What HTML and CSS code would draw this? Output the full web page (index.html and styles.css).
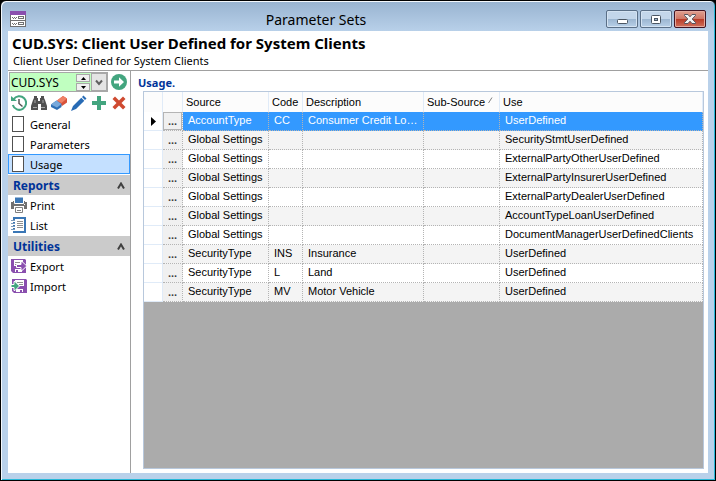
FILE: index.html
```html
<!DOCTYPE html>
<html lang="en">
<head>
  <meta charset="UTF-8">
  <meta name="viewport" content="width=device-width, initial-scale=1.0">
  <title>Parameter Sets</title>
  <link rel="stylesheet" href="styles.css">
</head>
<body>
  <div class="window">
    <div class="titlebar">
      <svg class="app-icon" width="16" height="16" viewBox="0 0 16 16" shape-rendering="crispEdges">
        <path fill="#fff" d="M0 0h16v16H0z"/>
        <path fill="#8a4fae" d="M0 0h16v4H0z"/>
        <path fill="none" stroke="#707070" d="M.5 4v11.500h15V4M0 9.500h16M8.500 5.500h5v2h-5zM8.500 11.500h5v2h-5z"/>
        <path fill="#707070" d="M2 6h1v1H2zM4 6h1v1H4zM3 7h1v1H3zM5 7h1v1H5zM6 6h1v1H6zM2 12h1v1H2zM4 12h1v1H4zM3 13h1v1H3zM5 13h1v1H5zM6 12h1v1H6z"/>
      </svg>
      <span class="title">Parameter Sets</span>
      <div class="controls">
        <button type="button" class="control" aria-label="Minimize">
          <svg width="12" height="12" viewBox="0 0 12 12"><rect x="1.500" y="6.500" width="10" height="4" rx="1" fill="#fff" stroke="#4b5663"/></svg>
        </button>
        <button type="button" class="control" aria-label="Maximize">
          <svg width="12" height="12" viewBox="0 0 12 12"><rect x="1.500" y="2.500" width="9" height="8" rx="1" fill="#fff" stroke="#4b5663"/><rect x="4.500" y="5.500" width="3" height="2" fill="#9db6cd" stroke="#4b5663"/></svg>
        </button>
        <button type="button" class="control close" aria-label="Close">
          <svg width="12" height="12" viewBox="0 0 12 12"><path d="M.5 1.500h3.500L6 3.800l2-2.300h3.500v1L8.200 6l3.300 3.500v1H8L6 8.200l-2 2.300H.5v-1L3.800 6 .5 2.500z" fill="#f2f2f2" stroke="#57555f"/></svg>
        </button>
      </div>
    </div>

    <div class="content">
      <header class="header">
        <h1>CUD.SYS: Client User Defined for System Clients</h1>
        <p>Client User Defined for System Clients</p>
      </header>

      <div class="panes">
        <aside class="sidebar">
          <div class="picker">
            <div class="combo">
              <input type="text" class="code" value="CUD.SYS" aria-label="Parameter set">
              <div class="spinner">
                <button type="button" class="spin" aria-label="Previous"><svg width="5" height="3" viewBox="0 0 5 3"><path d="M0 3L2.500 0 5 3z"/></svg></button>
                <button type="button" class="spin" aria-label="Next"><svg width="5" height="3" viewBox="0 0 5 3"><path d="M0 0L2.500 3 5 0z"/></svg></button>
              </div>
              <button type="button" class="drop" aria-label="Open list"><svg width="8" height="7" viewBox="0 0 8 7"><path d="M1 1.500l3 3.500 3-3.500" fill="none" stroke="#606060" stroke-width="2"/></svg></button>
            </div>
            <button type="button" class="tool" aria-label="Go">
              <svg width="16" height="16" viewBox="0 0 16 16"><circle cx="8" cy="8" r="8" fill="#43a57f"/><path fill="#fff" d="M3 6.500h5V3.300L13 8l-5 4.700V9.500H3z"/></svg>
            </button>
          </div>

          <div class="toolbar">
            <button type="button" class="tool" aria-label="History">
              <svg width="16" height="16" viewBox="0 0 16 16" fill="none"><path d="M2.500 4.500A6.800 6.800 0 1 1 1.800 10" stroke="#43a57f" stroke-width="2"/><path fill="#43a57f" d="M0 1l6 5H0z"/><path d="M8 4v4.500l3.500 3" stroke="#555" stroke-width="1.500"/></svg>
            </button>
            <button type="button" class="tool" aria-label="Find">
              <svg width="16" height="16" viewBox="0 0 16 16" fill="#505050"><path d="M3 1h3v2h1v3h2V3h1V1h3v2l1 2 2 6v4h-6V9H7v6H0v-4l2-6 1-2z"/><path stroke="#fff" d="M2 12.500h4M10 12.500h4M4 5v3M12 5v3" opacity=".5"/></svg>
            </button>
            <button type="button" class="tool" aria-label="Clear">
              <svg width="16" height="16" viewBox="0 0 16 16"><path fill="#d8523a" d="M6 5.500L12 1l4 2.500v4L11 11z"/><path fill="#ef8167" d="M6 5.500L12 1l4 2.500-5.500 4.500z"/><path fill="#2e6fb5" d="M0 9.500l5.500-4 5 3.500v3L6 15l-6-3z"/><path fill="#78a9db" d="M0 9.500l5.500-4 5 3.500L6 12.500z"/></svg>
            </button>
            <button type="button" class="tool" aria-label="Edit">
              <svg width="16" height="16" viewBox="0 0 16 16" fill="#286bb5"><path d="M12.500.5L15.500 3.500 14 5 11 2zM10.300 2.700l3 3L5 14l-5 2 2-5z"/></svg>
            </button>
            <button type="button" class="tool" aria-label="Add">
              <svg width="16" height="16" viewBox="0 0 16 16" fill="#43a57f"><path d="M6 1h4v5h5v4h-5v5H6v-5H1V6h5z"/></svg>
            </button>
            <button type="button" class="tool" aria-label="Delete">
              <svg width="16" height="16" viewBox="0 0 16 16" fill="#cf4a30"><path d="M4 1.500l4 4 4-4L14.500 4l-4 4 4 4-2.500 2.500-4-4-4 4L1.500 12l4-4-4-4z"/></svg>
            </button>
          </div>

          <nav class="menu">
            <a href="#general" class="item"><span class="page"></span>General</a>
            <a href="#parameters" class="item"><span class="page"></span>Parameters</a>
            <a href="#usage" class="item selected"><span class="page"></span>Usage</a>

            <h2 class="group">Reports <svg width="8" height="7" viewBox="0 0 8 7"><path d="M1 6.500L4 1.500l3 5" fill="none" stroke="#404040" stroke-width="2"/></svg></h2>
            <a href="#print" class="item">
              <svg width="16" height="16" viewBox="0 0 16 16"><path fill="#707070" d="M0 5h2V4h12v1h2v7h-3v-2H3v2H0z"/><path fill="#3a76b5" stroke="#fff" d="M3.500 0h9v6.500h-9z"/><path fill="#fff" d="M3 9h10v1H3zM13 7h1v1h-1z"/><path fill="#fff" stroke="#808080" d="M4.500 10.500h7v5h-7zM6 13.500h4"/></svg>
              Print
            </a>
            <a href="#list" class="item">
              <svg width="16" height="16" viewBox="0 0 16 16"><path fill="#fff" stroke="#3a76b5" stroke-width="2" d="M3 1h11v14H3z"/><path stroke="#909090" d="M6 4.500h6M6 6.500h6M6 8.500h6M6 10.500h6"/><path stroke="#fff" stroke-width="2" d="M1 4h3M1 7h3M1 10h3M1 13h3"/><path stroke="#7d9cbd" d="M0 3.500h4M0 6.500h4M0 9.500h4M0 12.500h4"/></svg>
              List
            </a>

            <h2 class="group">Utilities <svg width="8" height="7" viewBox="0 0 8 7"><path d="M1 6.500L4 1.500l3 5" fill="none" stroke="#404040" stroke-width="2"/></svg></h2>
            <a href="#export" class="item">
              <svg width="16" height="16" viewBox="0 0 16 16"><path fill="#8a4fae" d="M0 1h14l1 1v13H2l-2-2z"/><path fill="#fff" d="M3 2h9v6H3zM4 11h7v3H4z"/><path fill="#8a4fae" d="M5 12h2v2H5z"/><path stroke="#909090" d="M4 4.500h5M4 6.500h3"/><path fill="#8a4fae" stroke="#fff" d="M5.500 6.500H10v-3h1L15.800 8 11 12.500h-1v-3H5.500z"/></svg>
              Export
            </a>
            <a href="#import" class="item">
              <svg width="16" height="16" viewBox="0 0 16 16"><path fill="#8a4fae" d="M1 1h14l1 1v13H3l-2-2z"/><path fill="#fff" d="M4 2h9v6H4zM5 11h7v3H5z"/><path fill="#8a4fae" d="M9 12h2v2H9z"/><path stroke="#909090" d="M6 4.500h6M8 6.500h4"/><path fill="#43a57f" stroke="#fff" d="M0 6.500h3v-3h1L8.500 8 4 12.500H3v-3H0z"/></svg>
              Import
            </a>
          </nav>
        </aside>

        <main class="main">
          <h2 class="caption">Usage.</h2>
          <div class="grid">
            <table>
              <colgroup>
                <col class="col-mark"><col class="col-more"><col class="col-source"><col class="col-code"><col class="col-desc"><col class="col-sub"><col>
              </colgroup>
              <thead>
                <tr>
                  <th></th><th></th><th>Source</th><th>Code</th><th>Description</th>
                  <th>Sub-Source <svg class="sort" width="6" height="6" viewBox="0 0 6 6"><path d="M.5 6L4 .5" stroke="#808080"/></svg></th>
                  <th>Use</th>
                </tr>
              </thead>
              <tbody>
                <tr class="current"><td class="mark"><svg width="5" height="9" viewBox="0 0 5 9"><path d="M0 0l5 4.500L0 9z"/></svg></td><td class="more"><button type="button">...</button></td><td>AccountType</td><td>CC</td><td>Consumer Credit Loan</td><td></td><td>UserDefined</td></tr>
                <tr><td class="mark"></td><td class="more"><button type="button">...</button></td><td>Global Settings</td><td></td><td></td><td></td><td>SecurityStmtUserDefined</td></tr>
                <tr><td class="mark"></td><td class="more"><button type="button">...</button></td><td>Global Settings</td><td></td><td></td><td></td><td>ExternalPartyOtherUserDefined</td></tr>
                <tr><td class="mark"></td><td class="more"><button type="button">...</button></td><td>Global Settings</td><td></td><td></td><td></td><td>ExternalPartyInsurerUserDefined</td></tr>
                <tr><td class="mark"></td><td class="more"><button type="button">...</button></td><td>Global Settings</td><td></td><td></td><td></td><td>ExternalPartyDealerUserDefined</td></tr>
                <tr><td class="mark"></td><td class="more"><button type="button">...</button></td><td>Global Settings</td><td></td><td></td><td></td><td>AccountTypeLoanUserDefined</td></tr>
                <tr><td class="mark"></td><td class="more"><button type="button">...</button></td><td>Global Settings</td><td></td><td></td><td></td><td>DocumentManagerUserDefinedClients</td></tr>
                <tr><td class="mark"></td><td class="more"><button type="button">...</button></td><td>SecurityType</td><td>INS</td><td>Insurance</td><td></td><td>UserDefined</td></tr>
                <tr><td class="mark"></td><td class="more"><button type="button">...</button></td><td>SecurityType</td><td>L</td><td>Land</td><td></td><td>UserDefined</td></tr>
                <tr><td class="mark"></td><td class="more"><button type="button">...</button></td><td>SecurityType</td><td>MV</td><td>Motor Vehicle</td><td></td><td>UserDefined</td></tr>
              </tbody>
            </table>
          </div>
        </main>
      </div>
    </div>
  </div>
</body>
</html>
```
FILE: styles.css
```css
* {
  box-sizing: border-box;
}
body {
  margin: 0;
  background: #000;
  font-family: "Noto Sans", "Open Sans", sans-serif;
  font-size: 11px;
  color: #000;
}
h1, h2, p {
  margin: 0;
}
button {
  padding: 0;
  cursor: pointer;
}
svg {
  display: block;
  flex: none;
}

/* window frame */
.window {
  display: flex;
  flex-direction: column;
  min-height: 100vh;
  padding: 0 7px 7px;
  border: 1px solid #000;
  border-radius: 6px 6px 0 0;
  background: linear-gradient(#98b3d0, #b9d1ea 31px);
  box-shadow: inset 1px 1px #f4f8fc, inset -1px -1px #28b8d8;
}
.titlebar {
  display: flex;
  align-items: flex-start;
  height: 30px;
  padding: 9px 2px 0;
}
.app-icon {
  margin-top: 1px;
}
.title {
  flex: 1;
  text-align: center;
  font-size: 14px;
  line-height: 20px;
}
.controls {
  display: flex;
  gap: 2px;
}
.control {
  display: flex;
  align-items: center;
  justify-content: center;
  width: 32px;
  height: 18px;
  border: 1px solid #5a6f87;
  border-radius: 2px;
  background: linear-gradient(#c3d6ea 50%, #9bb5d0 50%, #b8d0e8);
  box-shadow: inset 0 0 0 1px #d4e3f2;
}
.close {
  border-color: #431422;
  background: linear-gradient(#e0a090, #cf7565 50%, #b83a26 50%, #d0705c);
  box-shadow: inset 0 0 0 1px #e3a99e;
}

.content {
  flex: 1;
  display: flex;
  flex-direction: column;
  background: #fff;
}
.header {
  height: 40px;
  padding: 2px 4px 0;
  border-bottom: 1px solid #a0a0a0;
}
.header h1 {
  font-size: 15px;
  line-height: 20px;
}
.header p {
  padding-left: 1px;
  line-height: 16px;
}
.panes {
  flex: 1;
  display: flex;
}

/* left side */
.sidebar {
  width: 123px;
  border-right: 1px solid #a0a0a0;
}
.picker {
  display: flex;
  align-items: center;
  gap: 3px;
  padding: 1px 0 0 1px;
}
.combo {
  display: flex;
  width: 99px;
  height: 20px;
  border: 1px solid #a8a8a8;
  background: #c0ffc0;
}
.code {
  flex: 1;
  min-width: 0;
  padding: 0 1px;
  border: 0;
  background: none;
  font: inherit;
  font-size: 12px;
}
.spinner {
  display: flex;
  flex-direction: column;
  gap: 1px;
  padding: 1px 1px 0 0;
}
.spin {
  display: flex;
  align-items: center;
  justify-content: center;
  width: 14px;
  height: 8px;
  border: 1px solid #a8a8a8;
  background: #f0f0f0;
}
.drop {
  display: flex;
  align-items: center;
  justify-content: center;
  width: 16px;
  border: 1px solid #a8a8a8;
  background: #e4e4e4;
}
.tool {
  width: 16px;
  height: 16px;
  border: 0;
  background: none;
}
.toolbar {
  display: flex;
  gap: 4px;
  padding: 3px 3px 3px;
}
.item {
  display: flex;
  align-items: center;
  gap: 3px;
  height: 20px;
  padding-left: 3px;
  color: #000;
  text-decoration: none;
}
.selected {
  padding-left: 2px;
  border: 1px solid #3399ff;
  background: #c4e0ff;
}
.page {
  width: 12px;
  height: 16px;
  margin: 0 3px 0 1px;
  border: 1px solid #505050;
  background: #fff;
}
.group {
  display: flex;
  align-items: center;
  justify-content: space-between;
  height: 20px;
  margin-top: 1px;
  padding: 0 5px;
  background: #cbcbcb;
  color: #003399;
  font-size: 12px;
}

/* right side */
.main {
  flex: 1;
  display: flex;
  flex-direction: column;
  min-width: 0;
  padding: 4px 4px 4px 12px;
}
.caption {
  margin-left: -5px;
  height: 16px;
  line-height: 16px;
  color: #003399;
  font-size: 11px;
}
.grid {
  flex: 1;
  border: 1px solid #b8c8dc;
  background: #ababab;
  font-family: "Liberation Sans", Arial, sans-serif;
  font-size: 11px;
}
table {
  width: 100%;
  table-layout: fixed;
  border-collapse: separate;
  border-spacing: 0;
}
.col-mark { width: 19px; }
.col-more { width: 20px; }
.col-source { width: 86px; }
.col-code { width: 34px; }
.col-desc { width: 121px; }
.col-sub { width: 76px; }
th {
  height: 20px;
  padding: 0 3px;
  border-right: 1px solid #e0ebf8;
  background: #fcfcfc;
  font-weight: normal;
  text-align: left;
  white-space: nowrap;
}
.sort {
  display: inline-block;
  vertical-align: 3px;
}
td {
  height: 19px;
  padding: 0 5px 2px;
  border-right: 1px dotted #b4b4b4;
  border-bottom: 1px dotted #b4b4b4;
  background: #fff;
  line-height: 16px;
  overflow: hidden;
  text-overflow: ellipsis;
  white-space: nowrap;
}
tr:nth-child(even) td {
  background: #f4f4f4;
}
.current td {
  background: #3399ff;
  color: #fff;
}
tr .mark,
tr:nth-child(even) .mark {
  padding: 0 0 0 7px;
  border-right-style: solid;
  border-bottom-style: solid;
  border-color: #e0ebf8;
  background: #fff;
}
tr .more {
  padding: 0;
  background: #f0f0f0;
}
.more button {
  display: block;
  width: 100%;
  height: 18px;
  border: 0;
  background: #f0f0f0;
  color: #404040;
  font: bold 11px "Liberation Sans", Arial, sans-serif;
}
.current .more button {
  border: 1px solid #b4b4b4;
}
```
